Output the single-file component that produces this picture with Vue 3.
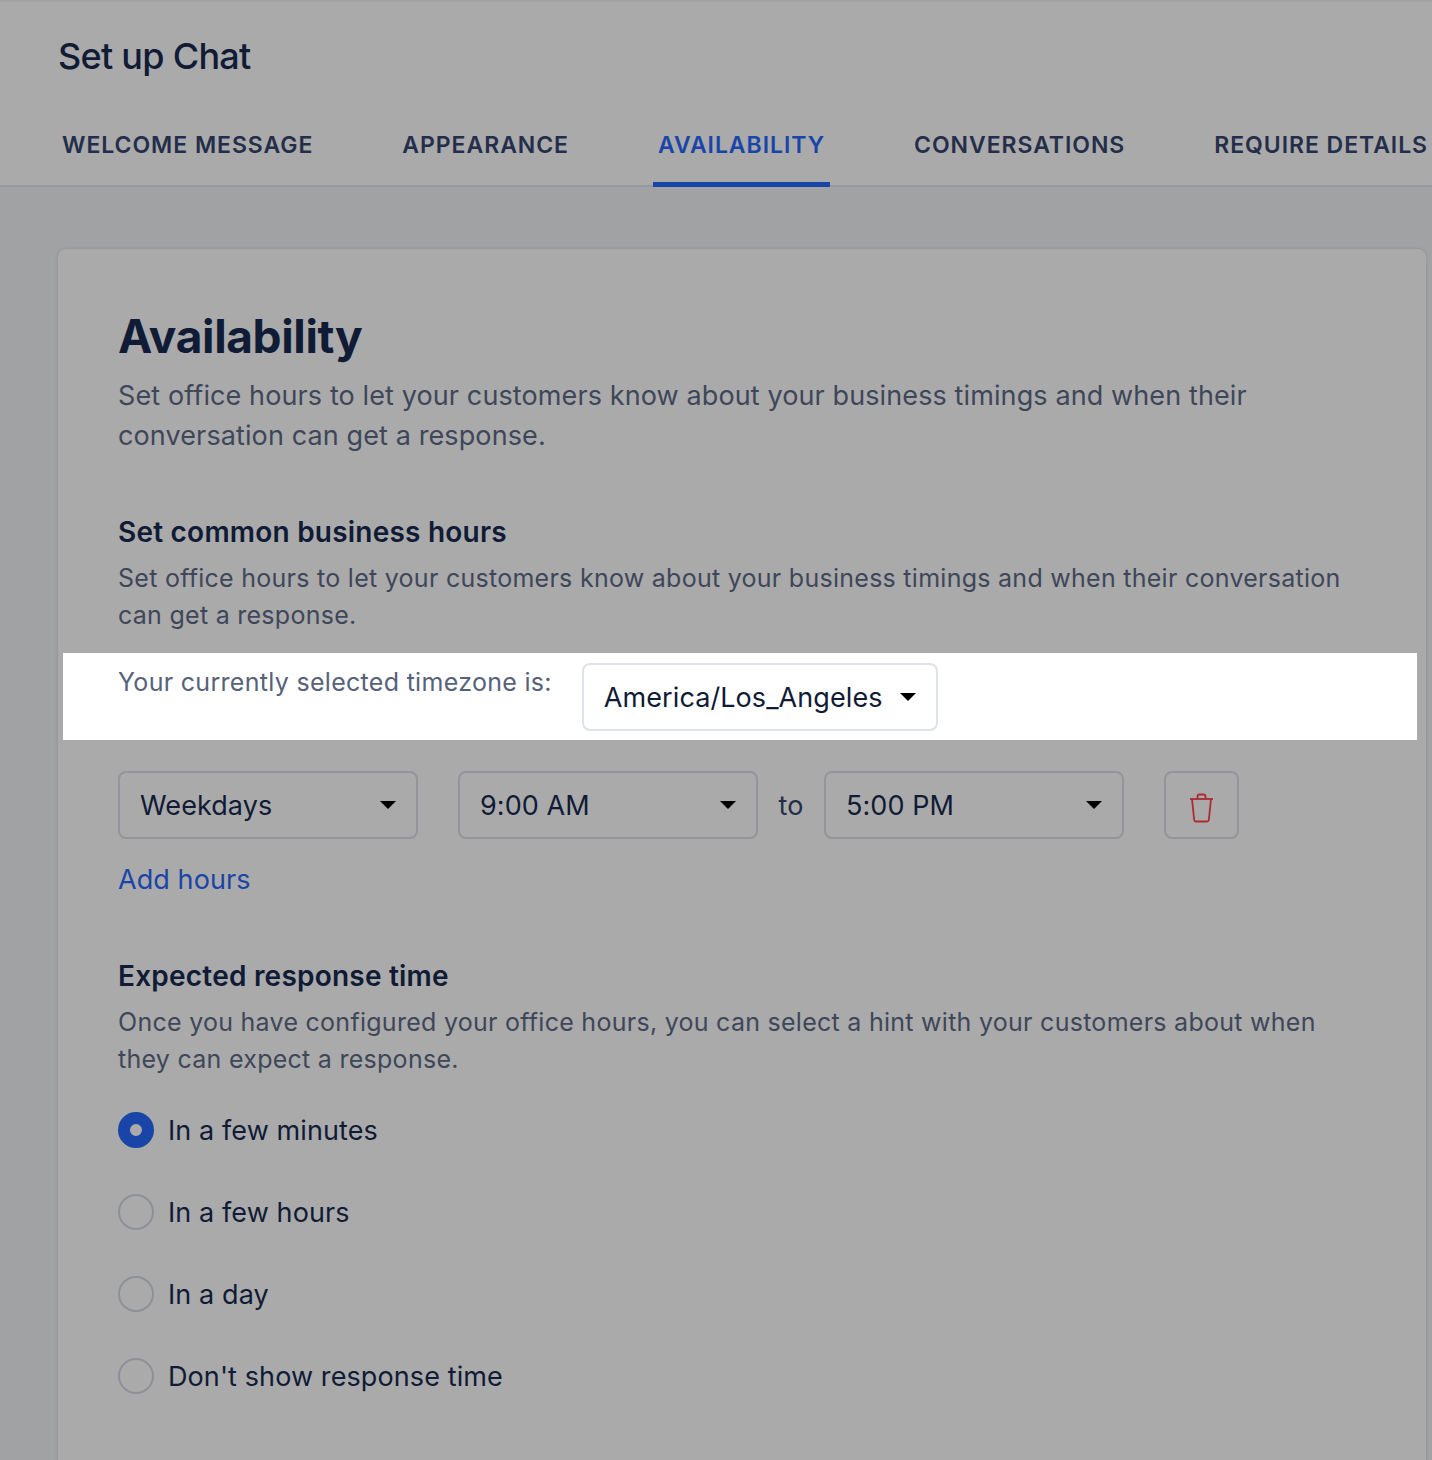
<script setup>
const tabs = ['WELCOME MESSAGE', 'APPEARANCE', 'AVAILABILITY', 'CONVERSATIONS', 'REQUIRE DETAILS']
const responses = ["In a few minutes", "In a few hours", "In a day", "Don't show response time"]
const hours = ['Weekdays', '9:00 AM']
</script>

<template>
  <div class="page">
    <header class="head">
      <h1 class="title">Set up Chat</h1>
      <nav class="tabs">
        <div v-for="t in tabs" :key="t" class="tab" :class="{ active: t === 'AVAILABILITY' }">{{ t }}</div>
      </nav>
    </header>
    <main class="body">
      <section class="card">
        <h2 class="h2">Availability</h2>
        <p class="lead">Set office hours to let your customers know about your business timings and when their conversation can get a response.</p>

        <h3 class="h3 first">Set common business hours</h3>
        <p class="sub">Set office hours to let your customers know about your business timings and when their conversation can get a response.</p>

        <div class="spot">
          <span class="tz-label">Your currently selected timezone is:</span>
          <div class="select tz">
            <span>America/Los_Angeles</span>
            <i class="caret"></i>
          </div>
        </div>

        <div class="hours">
          <div v-for="h in hours" :key="h" class="select hour">
            <span>{{ h }}</span>
            <i class="caret"></i>
          </div>
          <span class="to">to</span>
          <div class="select hour">
            <span>5:00 PM</span>
            <i class="caret"></i>
          </div>
          <button class="del" type="button" aria-label="Delete">
            <svg width="25" height="30" viewBox="0 0 25 30" fill="none" stroke="#ad2a31" stroke-width="1.8">
              <path d="M1 6H24" />
              <path d="M8.5 6V3.5Q8.5 1.5 10.5 1.5H14.5Q16.5 1.5 16.5 3.5V6" />
              <path d="M3 6L5.2 27Q5.4 28.5 7 28.5H18Q19.6 28.5 19.8 27L22 6" />
            </svg>
          </button>
        </div>
        <a class="add">Add hours</a>

        <h3 class="h3 second">Expected response time</h3>
        <p class="sub">Once you have configured your office hours, you can select a hint with your customers about when they can expect a response.</p>

        <div class="radios">
          <label v-for="(r, i) in responses" :key="r" class="radio">
            <span class="dot" :class="{ on: i === 0 }"></span>
            <span>{{ r }}</span>
          </label>
        </div>
      </section>
    </main>
  </div>
</template>

<style>
html, body { margin: 0; background: #a1a2a4; }
</style>

<style scoped>
.page {
  width: 1432px;
  height: 1460px;
  overflow: hidden;
  font-family: Inter, "Liberation Sans", sans-serif;
  background: #a1a2a4;
  color: #101b36;
}
.head {
  background: #aaaaaa;
  height: 185px;
  border-bottom: 2px solid #929aa3;
  padding-left: 58px;
  box-shadow: inset 0 2px 0 #a2a2a2;
}
.title {
  margin: 0;
  padding-top: 34px;
  font-size: 36px;
  line-height: 44px;
  font-weight: 500;
  letter-spacing: -0.72px;
  color: #101b36;
}
.tabs {
  display: flex;
  gap: 79px;
  margin: 49px 0 0 -1px;
  width: 1500px;
}
.tab {
  padding: 0 5px;
  height: 60px;
  box-sizing: border-box;
  font-size: 23px;
  line-height: 36px;
  font-weight: 600;
  letter-spacing: 0.95px;
  color: #242e4a;
  white-space: nowrap;
}
.tab.active {
  color: #1a45a8;
  border-bottom: 5px solid #1a45a8;
}
.body {
  padding: 62px 6px 0 58px;
}
.card {
  background: #aaaaaa;
  border-radius: 8px;
  height: 1300px;
  padding: 57px 60px 0;
  box-sizing: border-box;
  box-shadow: 0 0 3px rgba(120, 125, 135, 0.6);
}
.h2 {
  margin: 0;
  font-size: 46px;
  line-height: 60px;
  font-weight: 700;
  letter-spacing: -0.35px;
  color: #101b36;
}
.lead {
  margin: 10px 0 0;
  font-size: 27px;
  line-height: 40px;
  letter-spacing: 0.11px;
  color: #3e4759;
}
.h3 {
  margin: 0;
  font-size: 28px;
  line-height: 36px;
  font-weight: 600;
  letter-spacing: 0.22px;
  color: #101b36;
}
.h3.first { margin-top: 58px; }
.h3.second { margin-top: 60px; }
.sub {
  margin: 10px 0 0;
  font-size: 25px;
  line-height: 37px;
  letter-spacing: 0.27px;
  color: #3e4759;
}
.spot {
  margin: 19px -51px 0 -55px;
  height: 87px;
  background: #fff;
  padding-left: 55px;
  display: flex;
  align-items: flex-start;
  position: relative;
}
.tz-label {
  font-size: 25px;
  line-height: 36px;
  padding-top: 11px;
  letter-spacing: 0.3px;
  color: #56617a;
  white-space: nowrap;
}
.select {
  height: 68px;
  box-sizing: border-box;
  border-radius: 8px;
  border: 2px solid #94949b;
  padding: 0 20px 0 20px;
  display: flex;
  align-items: center;
  justify-content: space-between;
  font-size: 27px;
  letter-spacing: 0.08px;
  color: #101b36;
}
.tz {
  margin: 10px 0 0 30px;
  width: 356px;
  background: #fff;
  border-color: #dfe3e8;
}
.caret {
  width: 0;
  height: 0;
  flex: none;
  border-left: 8px solid transparent;
  border-right: 8px solid transparent;
  border-top: 8px solid #000;
  display: block;
}
.hours {
  display: flex;
  align-items: center;
  margin-top: 31px;
}
.hour { width: 300px; }
.hour + .hour { margin-left: 40px; }
.to {
  width: 66px;
  text-align: center;
  font-size: 27px;
  color: #242e4a;
}
.to + .hour { margin-left: 0; }
.del {
  margin-left: 40px;
  width: 75px;
  height: 68px;
  box-sizing: border-box;
  background: transparent;
  border: 2px solid #94949b;
  border-radius: 8px;
  padding: 6px 0 0;
  display: flex;
  align-items: center;
  justify-content: center;
}
.add {
  display: block;
  margin-top: 23px;
  font-size: 27px;
  line-height: 36px;
  letter-spacing: 0.08px;
  color: #1a45a8;
}
.radios {
  margin-top: 34px;
  display: flex;
  flex-direction: column;
  gap: 46px;
}
.radio {
  display: flex;
  align-items: center;
  gap: 14px;
  height: 36px;
  font-size: 27px;
  letter-spacing: 0.1px;
  color: #101b36;
}
.dot {
  width: 36px;
  height: 36px;
  box-sizing: border-box;
  border-radius: 50%;
  border: 2px solid #8d9197;
  flex: none;
}
.dot.on {
  border: 12px solid #1a45a8;
  background: #aaaaaa;
}
</style>
